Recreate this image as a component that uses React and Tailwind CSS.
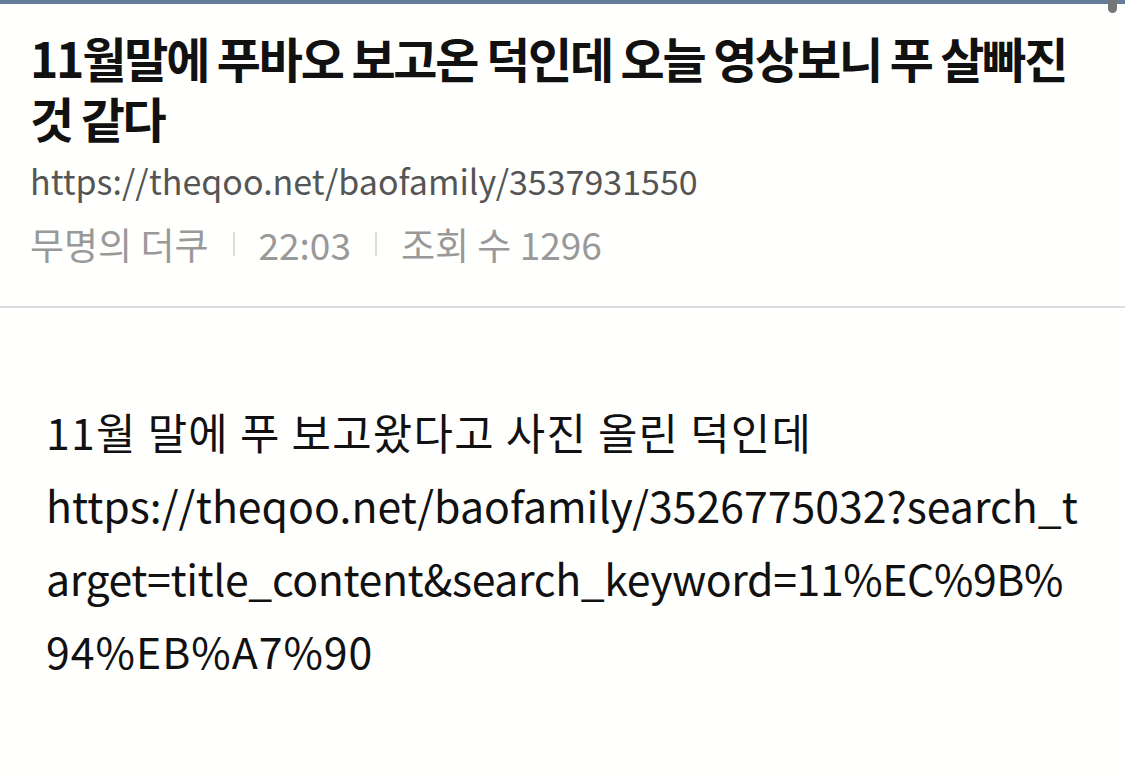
import React from 'react';

const KR = { fontFamily: '"Noto Sans CJK KR", "Noto Sans", sans-serif' };

const Sep = () => <span className="mx-[24px] inline-block h-[24px] w-[2px] bg-[#dcdcdc] align-middle" />;

export default function App() {
  return (
    <div className="relative min-h-[779px] w-[1125px] bg-[#fffffd]" style={KR}>
      <div className="h-[4px] bg-[#667d99]" />
      <div className="absolute right-[8px] top-0 h-[13px] w-[9px] rounded-b-full bg-[#767676]" />

      <header className="border-b-2 border-[#dedede] px-[30px] pb-[40px] pt-[23px]">
        <h1 className="text-[48px] font-bold leading-[60px] tracking-[-2.2px] text-[#111]">
          11월말에 푸바오 보고온 덕인데 오늘 영상보니 푸 살빠진
          <br />
          것 같다
        </h1>
        <p className="mt-[12px] text-[34px] leading-[44px] text-[#555]">https://theqoo.net/baofamily/3537931550</p>
        <div className="mt-[19px] flex items-center text-[37px] leading-[44px] text-[#999]">
          <span>무명의 더쿠</span>
          <Sep />
          <span>22:03</span>
          <Sep />
          <span>조회 수 1296</span>
        </div>
      </header>

      <article className="px-[46px] pt-[87px] text-[42.8px] leading-[73px] text-[#111]">
        <p className="tracking-[1.3px]">11월 말에 푸 보고왔다고 사진 올린 덕인데</p>
        <p className="whitespace-nowrap">
          https://theqoo.net/baofamily/3526775032?search_t
          <br />
          <span className="tracking-[-0.4px]">arget=title_content&amp;search_keyword=11%EC%9B%</span>
          <br />
          <span className="tracking-[1px]">94%EB%A7%90</span>
        </p>
      </article>
    </div>
  );
}
